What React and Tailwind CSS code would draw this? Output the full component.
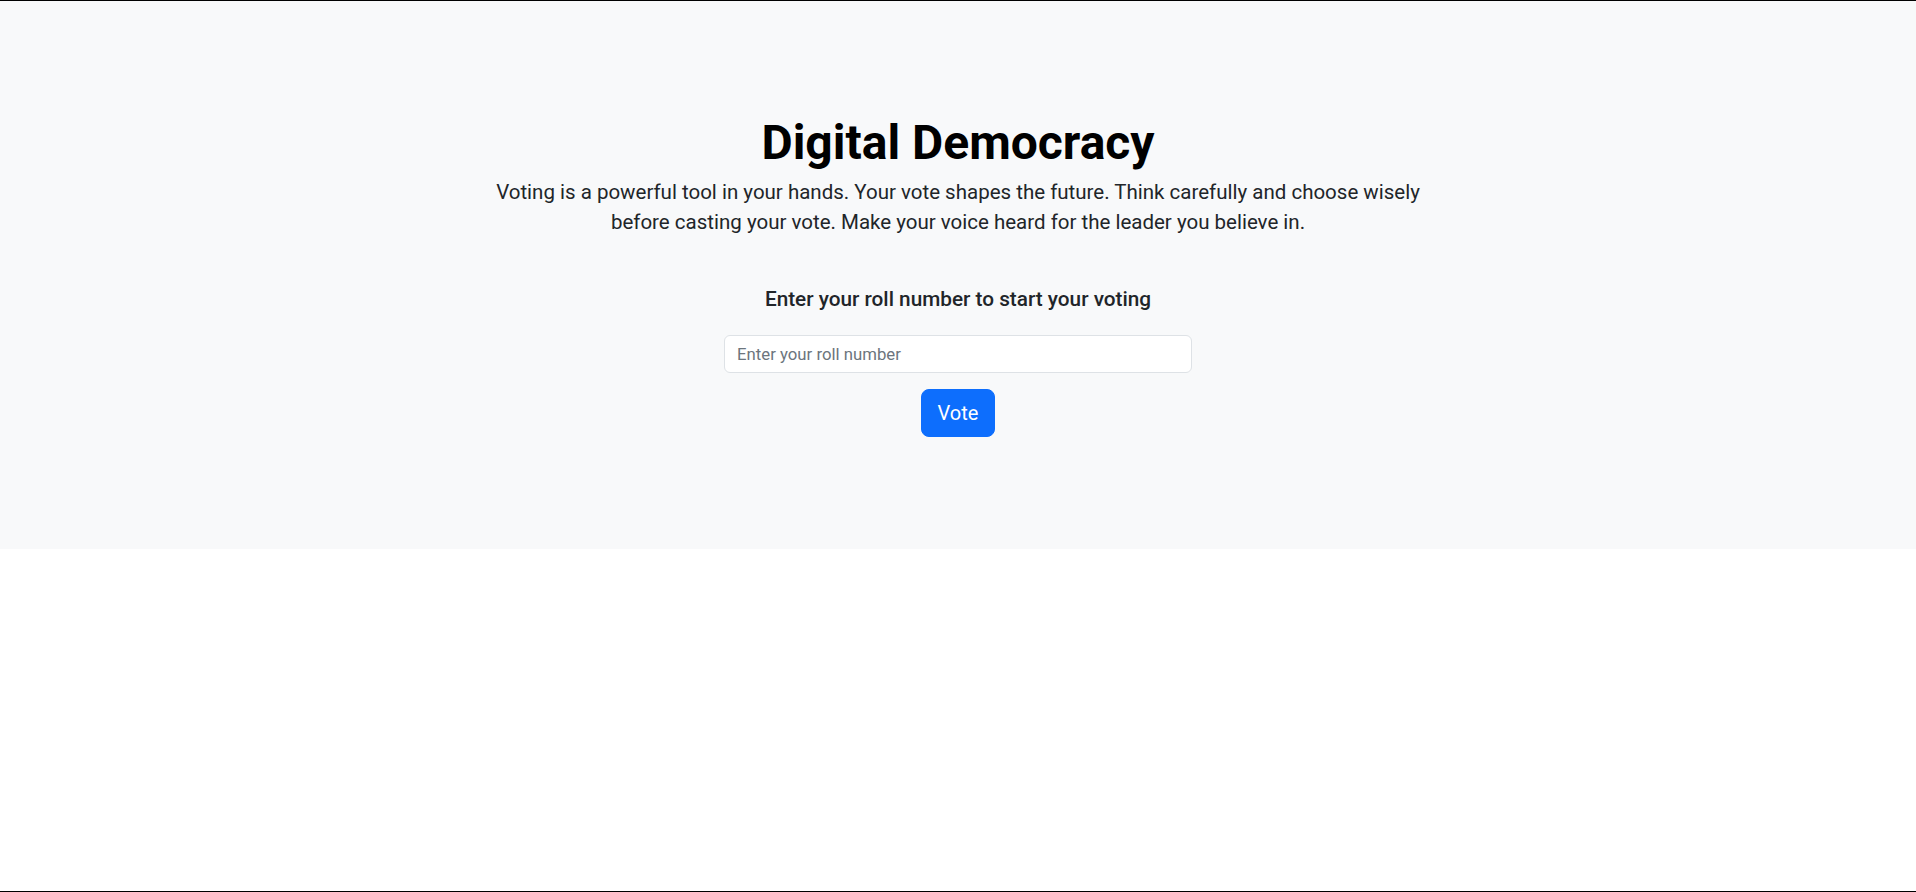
import React, { useState } from 'react';

export default function App() {
  const [roll, setRoll] = useState('');

  const handleSubmit = (e) => {
    e.preventDefault();
  };

  return (
    <div className="h-screen flex flex-col border-y border-black bg-white font-['Roboto',sans-serif]">
      <section className="bg-[#f8f9fa] pt-[113px] pb-[112px]">
        <div className="flex flex-col items-center text-center">
          <h1 className="text-[48px] leading-[57.6px] font-bold text-black mb-[5px]">Digital Democracy</h1>
          <p className="max-w-[940px] text-[20.5px] leading-[30px] font-normal text-[#212529] mb-[50px]">
            Voting is a powerful tool in your hands. Your vote shapes the future. Think carefully and choose wisely
            before casting your vote. Make your voice heard for the leader you believe in.
          </p>
          <h5 className="text-[20.75px] leading-[24px] font-medium text-[#212529] mb-6">
            Enter your roll number to start your voting
          </h5>
          <form onSubmit={handleSubmit} className="flex flex-col items-center gap-4">
            <input
              type="text"
              value={roll}
              onChange={(e) => setRoll(e.target.value)}
              placeholder="Enter your roll number"
              className="w-[468px] h-[38px] px-3 bg-white border border-[#dee2e6] rounded-md text-[16.75px] text-[#212529] placeholder:text-[#6c757d] outline-none"
            />
            <button
              type="submit"
              className="h-[48px] px-4 bg-[#0d6efd] border border-[#0d6efd] rounded-lg text-white text-[20px] leading-[30px]"
            >
              Vote
            </button>
          </form>
        </div>
      </section>
    </div>
  );
}
